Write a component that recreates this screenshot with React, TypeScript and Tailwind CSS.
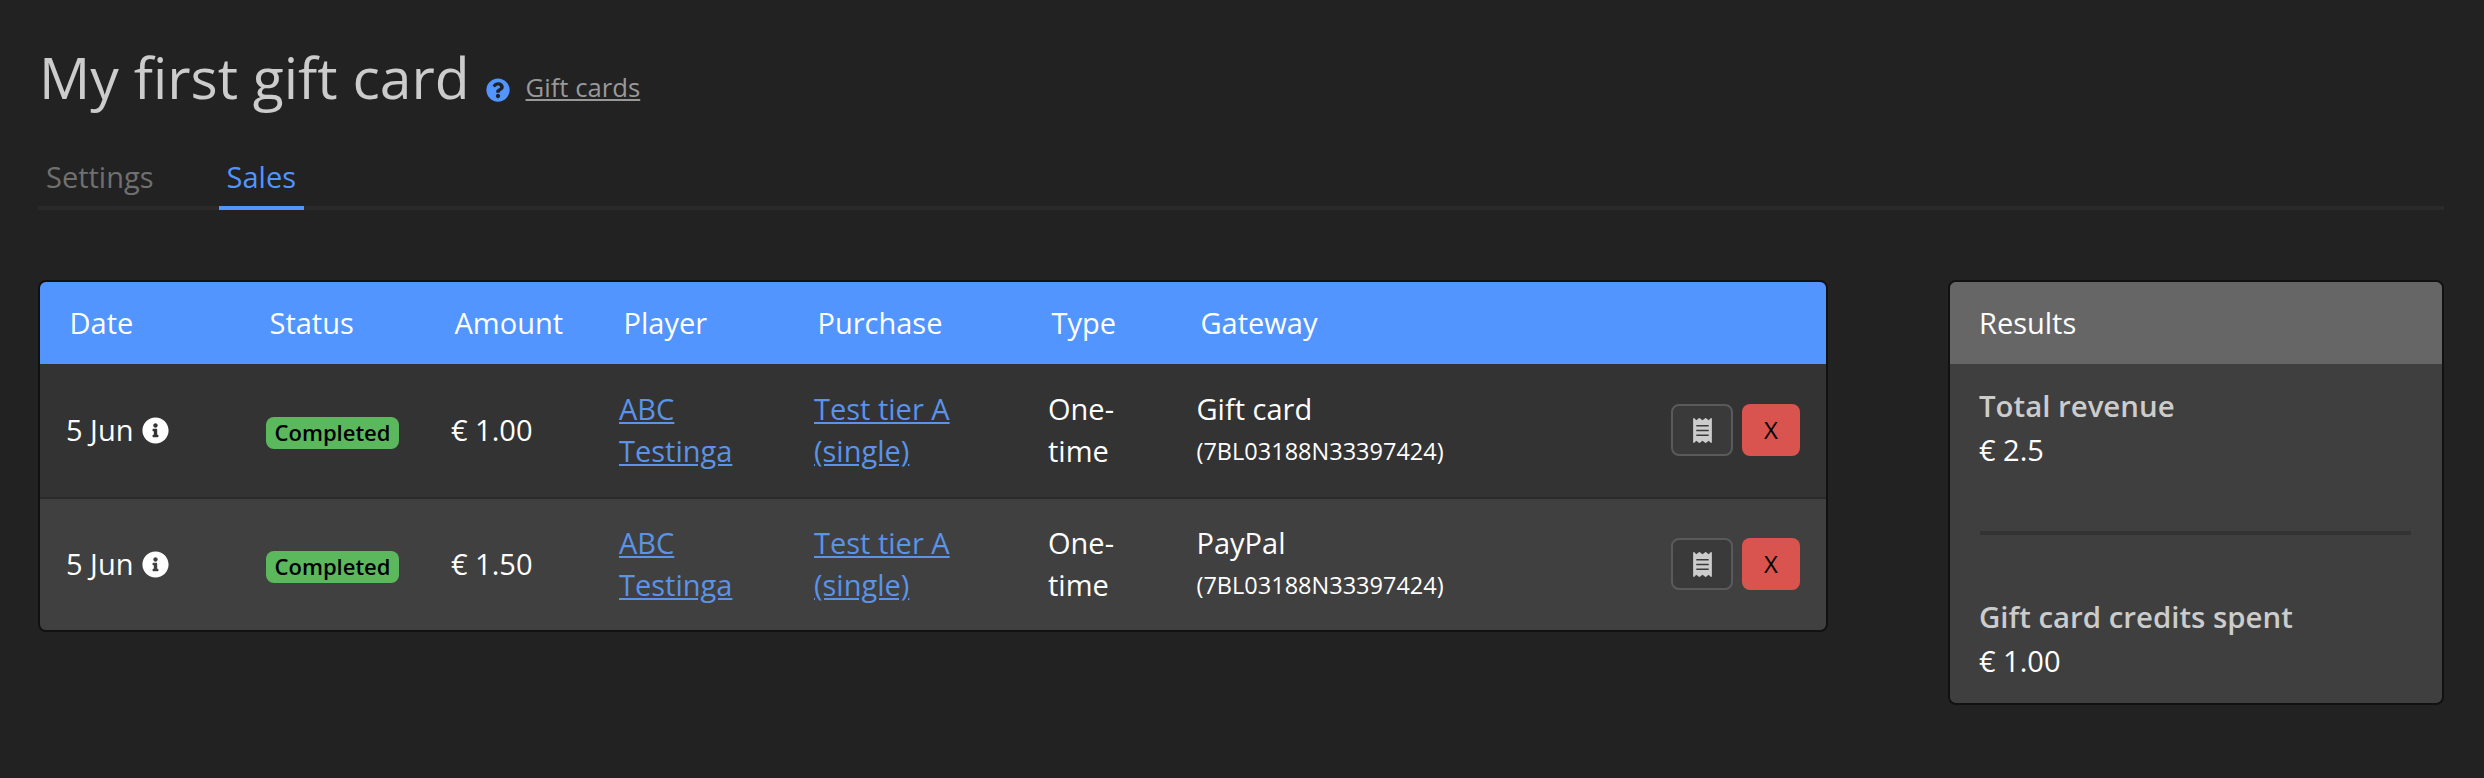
import { FaInfoCircle, FaQuestionCircle, FaReceipt } from "react-icons/fa";

const sales = [
  { amount: "€ 1.00", gateway: "Gift card", rowClass: "h-[134px] bg-[#333333] border-b-2 border-[#2a2a2a]" },
  { amount: "€ 1.50", gateway: "PayPal", rowClass: "h-[132px] bg-[#404040]" },
];

const headers = ["Date", "Status", "Amount", "Player", "Purchase", "Type", "Gateway"];

function SalesRow({ amount, gateway, rowClass }: { amount: string; gateway: string; rowClass: string }) {
  return (
    <tr className={rowClass}>
      <td className="pl-[26px] align-middle">
        <span className="flex items-center gap-[9px]">
          5 Jun
          <FaInfoCircle className="w-[27px] h-[27px] text-white" />
        </span>
      </td>
      <td className="pl-[26px] align-middle">
        <span className="inline-flex h-[32px] w-[133px] items-center justify-center rounded-lg bg-[#5cb85c] text-[22px] font-semibold text-black">
          Completed
        </span>
      </td>
      <td className="pl-[26px] align-middle">{amount}</td>
      <td className="pl-[25px] align-middle leading-[42px]">
        <a href="#" className="text-[#5a93e8] underline">ABC Testinga</a>
      </td>
      <td className="pl-[26px] pr-4 align-middle leading-[42px]">
        <a href="#" className="text-[#5a93e8] underline">Test tier A (single)</a>
      </td>
      <td className="pl-[26px] pr-[20px] align-middle leading-[42px]">One-time</td>
      <td className="pl-[25.5px] align-middle leading-[42px]">
        <div>{gateway}</div>
        <div className="text-[23.5px]">(7BL03188N33397424)</div>
      </td>
      <td className="pr-[26px] align-middle">
        <div className="flex justify-end gap-[9px]">
          <button className="flex h-[52px] w-[62px] items-center justify-center rounded-lg border-2 border-[#5a5a5a] bg-[#3a3a3a]">
            <FaReceipt className="h-[25px] w-[19px] text-[#cccccc]" />
          </button>
          <button className="h-[52px] w-[58px] rounded-lg bg-[#d9534f] text-[24px] text-black">X</button>
        </div>
      </td>
    </tr>
  );
}

export default function App() {
  return (
    <div className="min-h-[778px] bg-[#222222] pl-[38px] pr-[40px] pt-[38px] font-['Open_Sans','Noto_Sans',sans-serif] text-[29px] text-white">
      <div className="flex items-center pl-[1px]">
        <h1 className="text-[57px] leading-[78px] text-[#cccccc]">My first gift card</h1>
        <FaQuestionCircle className="ml-[16px] mt-[26px] h-[24px] w-[24px] text-[#5295ff]" />
        <a href="#" className="ml-[16px] mt-[22px] text-[25.7px] text-[#999999] underline">Gift cards</a>
      </div>

      <div className="mt-[39px] flex gap-[57px] border-b-4 border-[#2a2a2a]">
        <div className="px-2 pb-[7px] text-[#707070]">Settings</div>
        <div className="-mb-1 border-b-4 border-[#5295ff] px-2 pb-[7px] text-[#5295ff]">Sales</div>
      </div>

      <div className="mt-[70px] flex items-start gap-[120px]">
        <div className="flex-1 overflow-hidden rounded-lg border-2 border-[#111111]">
          <table className="w-full table-fixed border-collapse">
            <colgroup>
              <col className="w-[200px]" />
              <col className="w-[185px]" />
              <col className="w-[169px]" />
              <col className="w-[194px]" />
              <col className="w-[234px]" />
              <col className="w-[149px]" />
              <col className="w-[400px]" />
              <col />
            </colgroup>
            <thead>
              <tr className="h-[82px] bg-[#5295ff]">
                {headers.map((h) => (
                  <th key={h} className="pl-[29.5px] text-left font-normal">{h}</th>
                ))}
                <th />
              </tr>
            </thead>
            <tbody>
              {sales.map((s) => (
                <SalesRow key={s.amount} {...s} />
              ))}
            </tbody>
          </table>
        </div>

        <div className="w-[496px] overflow-hidden rounded-lg border-2 border-[#111111] bg-[#3f3f3f]">
          <div className="flex h-[82px] items-center bg-[#666666] px-[29px]">Results</div>
          <div className="px-[29px] pt-[20px] pb-[20px]">
            <div className="text-[29.4px] font-semibold text-[#cccccc]">Total revenue</div>
            <div>€ 2.5</div>
            <div className="mt-[60px] mb-[60px] ml-[1px] mr-[2px] h-1 bg-[#333333]" />
            <div className="text-[29.4px] font-semibold text-[#cccccc]">Gift card credits spent</div>
            <div>€ 1.00</div>
          </div>
        </div>
      </div>
    </div>
  );
}
